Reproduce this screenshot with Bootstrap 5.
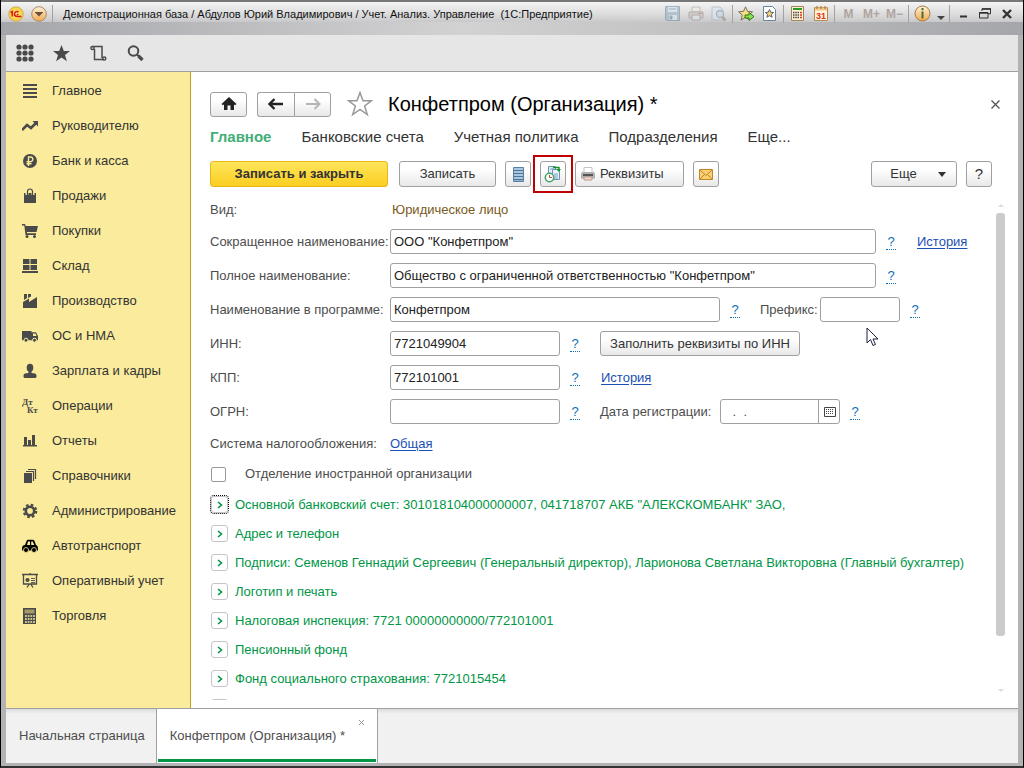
<!DOCTYPE html>
<html lang="ru">
<head>
<meta charset="utf-8">
<meta name="viewport" content="width=device-width, initial-scale=1">
<title>Конфетпром (Организация)</title>
<link href="https://cdn.jsdelivr.net/npm/bootstrap@5.3.0/dist/css/bootstrap.min.css" rel="stylesheet">
<style>
:root { --line: #a0a0a0; --ink: #333; --green: #009646; --blue: #0a6fb5; }
body { font-family: "Liberation Sans", Arial, sans-serif; font-size: 13px; line-height: 16px; color: var(--ink); background: #fff; }
svg { display: block; flex: none; }
.app-window { height: 100vh; border-left: 1px solid #000; border-right: 1px solid #000; border-bottom: 2px solid #333; background: #b3b3b5; padding: 0 5px 3px 5px; }
.title-bar { height: 35px; flex: none; margin: 0 -5px; padding: 0 5px 10px 3px; border-top: 2px solid #777; color: #111; font-size: 11px;
  background: linear-gradient(to bottom, #f4f4f4 0, #dcdcdd 12px, #c9c9cb 20px, transparent 20px), linear-gradient(to right, #a5a6aa, #d2d2d3 45%, #c4c4c5 65%, #a5a6aa); }
.title-bar button { width: 23px; height: 23px; border: 0; padding: 0; background: none; display: flex; align-items: center; justify-content: center; color: #b0a49e; font-size: 12px; font-weight: bold; }
.title-bar .win-btn { width: 22px; }
.title-bar .drop-btn { width: 13px; }
.bar-sep { width: 1px; height: 18px; margin: 0 2px; background: #a2a2a4; }
.tool-bar { height: 37px; flex: none; padding-left: 10px; background: #e6e6e6; border-bottom: 1px solid var(--line); }
.tool-bar button { width: 37px; height: 34px; padding: 0 10px 0 6px; border: 0; background: none; }
.middle { min-height: 0; overflow: hidden; }
.side-menu { width: 185px; background: #faeb9d; border-right: 1px solid #b9a21c; padding-top: 1px; }
.side-menu a { height: 35px; padding-left: 16px; gap: 14px; color: var(--ink); text-decoration: none; }
.work-area { padding: 19px 13px 8px 19px; background: #fff; min-width: 0; }
.page-title { font-size: 20px; line-height: 26px; color: #000; padding-left: 15px; }
.soft-btn { border: 1px solid #a0a0a0; border-radius: 3px; background: linear-gradient(#fff 30%, #e8e8e8); color: var(--ink); padding: 0; height: 26px; display: flex; align-items: center; justify-content: center; }
.soft-btn.low { height: 25px; }
.nav-btn { width: 37px; }
.nav-pair { margin: 0 16px 0 10px; }
.main-btn { width: 178px; border-color: #e7b71a; background: linear-gradient(#fee65c, #fbce21); font-weight: bold; }
.save-btn { width: 97px; margin-left: 2px; }
.print-btn { width: 109px; padding-left: 5px; gap: 5px; }
.more-btn { width: 86px; gap: 21px; padding-left: 8px; }
.help-btn { margin-right: 13px; font-size: 15px; }
.fill-btn { width: 200px; margin-left: 10px; }
.square-btn { width: 26px; }
.plain-x { border: 0; background: none; padding: 0; }
.sections { font-size: 15px; line-height: 18px; gap: 30px; padding-top: 11px; }
.sections a { color: var(--ink); text-decoration: none; }
.sections a.current { color: #43ae76; font-weight: bold; }
.commands { gap: 9px; padding-top: 15px; }
.red-frame { position: absolute; inset: -6px -7px; border: 2px solid #c00000; pointer-events: none; z-index: 2; }
.form-area { overflow: hidden; padding-top: 12px; color: #4d4d4d; }
.kind-row { height: 21px; margin-bottom: 9px; }
.kind-value { color: #79591a; padding-left: 2px; }
.field-row { height: 25px; margin-bottom: 9px; }
.field-name { width: 180px; flex: none; white-space: nowrap; }
.field-box { height: 25px; border: 1px solid #a0a0a0; border-radius: 3px; padding: 0 3px; color: #222; background: #fff; min-width: 0; }
.code-box { width: 170px; }
.prefix-name { width: 70px; padding-left: 10px; }
.prefix-box { width: 80px; }
.prefix-tail { width: 66px; flex: none; }
.date-name { width: 130px; padding-left: 10px; }
.help-slot { width: 30px; flex: none; text-align: center; }
.help-slot a { display: inline-block; padding: 0 1px; line-height: 15px; border-bottom: 1px dotted var(--blue); color: var(--blue); text-decoration: none; }
.ref { color: #1c4fb4; text-underline-offset: 2px; }
.tail { width: 90px; flex: none; padding-left: 11px; }
.date-box { width: 120px; height: 25px; border: 1px solid #a0a0a0; border-radius: 3px; }
.date-box input { width: 97px; border: 0; padding: 0 8px; background: none; color: #4d4d4d; white-space: pre; }
.date-box button { border: 0; border-left: 1px solid #a0a0a0; background: none; padding: 0 5px; }
.tax-row { height: 22px; }
.tick-row { height: 38px; }
.tick { width: 15px; height: 15px; border: 1px solid #999; border-radius: 2px; appearance: none; margin: 0 19px 0 1px; background: #fff; }
.group-list { margin-top: -3px; }
.group-row { height: 29px; flex: none; border: 0; padding: 0; background: none; color: var(--green); gap: 7px; white-space: nowrap; text-align: left; }
.chev { width: 17px; height: 17px; border: 1px solid #c5c5c5; border-radius: 3px; display: flex; align-items: center; justify-content: center; flex: none; margin-left: 1px; }
.focused .chev { outline: 1px dotted #000; outline-offset: 0; }
.scroll-rail { width: 9px; margin: 13px 0 8px; }
.scroll-thumb { background: #cbcbcb; border-radius: 3px; flex: 0 1 423px; margin-top: 6px; }
.window-tabs { height: 55px; flex: none; border-top: 1px solid var(--line); background: linear-gradient(#dcdcdc, #f1f1f1 5px); color: #4d4d4d; }
.window-tabs a { color: inherit; text-decoration: none; padding: 0 11px 0 13px; display: flex; align-items: center; }
.open-tab { width: 222px; position: relative; background: #fff; border: solid var(--line); border-width: 0 1px; }
.open-tab::after { content: ""; position: absolute; left: 1px; right: 1px; bottom: 1px; height: 3px; background: var(--green); }
.open-tab button { position: absolute; right: 12px; top: 10px; }
.pointer { position: absolute; left: 656px; top: 140px; pointer-events: none; }
</style>
</head>
<body>
<div class="app-window d-flex flex-column">
  <header class="title-bar d-flex align-items-center">
    <button type="button" aria-label="1С"><svg width="16" height="16" viewBox="0 0 16 16"><defs><radialGradient id="gy"><stop offset="0" stop-color="#fff6a0"/><stop offset="1" stop-color="#f7c52c"/></radialGradient><linearGradient id="go" x2="0" y2="1"><stop offset="0" stop-color="#fff2dc"/><stop offset="1" stop-color="#f3a94e"/></linearGradient></defs><circle cx="8" cy="8" r="7.3" fill="url(#gy)" stroke="#c9a46a" stroke-width=".8"/><path d="M2.500 6.500L4.300 5.500v5M10.500 6.300C9 4.800 6.500 5.500 6.500 8s1.500 2.500 3 2.500h4M10.500 8.500H8.700" fill="none" stroke="#d8200f" stroke-width="1.600"/></svg></button>
    <button type="button" aria-label="Меню"><svg width="16" height="16" viewBox="0 0 16 16"><circle cx="8" cy="8" r="7.300" fill="url(#go)" stroke="#a98a66"/><path d="M3.500 6h9L8 10.500z" fill="#6a5038"/></svg></button>
    <span class="bar-sep"></span>
    <span class="ps-2 text-nowrap">Демонстрационная база / Абдулов Юрий Владимирович / Учет. Анализ. Управление&nbsp; (1С:Предприятие)</span>
    <div class="d-flex align-items-center ms-auto">
      <button type="button" aria-label="Сохранить"><svg width="15" height="15" viewBox="0 0 15 15" opacity=".65"><path d="M.5.500h14v14h-13l-1-1z" fill="#9bb5c8" stroke="#7895aa"/><path d="M3 1h9v5H3zM4 9h8v5H4z" fill="#dbe3e9"/><path d="M4 3h7M5 10h2v3H5z" stroke="#7895aa" fill="#7895aa"/></svg></button>
      <button type="button" aria-label="Печать"><svg width="16" height="15" viewBox="0 0 16 15" opacity=".55"><path d="M4 1h8v5H4z" fill="#f5ebe3" stroke="#a59a94"/><path d="M1 6h14v6H1z" fill="#c9beb8" stroke="#928b88"/><path d="M4 9h8v5H4z" fill="#dfe9ef" stroke="#928b88"/><path d="M10 7.500h4" stroke="#c65"/></svg></button>
      <button type="button" aria-label="Просмотр"><svg width="16" height="16" viewBox="0 0 16 16" opacity=".6"><path d="M1 1h8l3 3v10H1z" fill="#dae4ec" stroke="#9badbb"/><circle cx="9" cy="8" r="3.500" fill="#c3d8e5" stroke="#7d99ad" stroke-width="1.300"/><path d="M11.500 11l3 3.500" stroke="#a87e68" stroke-width="2.500"/></svg></button>
      <span class="bar-sep"></span>
      <button type="button" aria-label="В избранное"><svg width="17" height="16" viewBox="0 0 17 16"><path d="M7.500.8l2 4.600 5 .4-3.800 3.300 1.200 4.900-4.400-2.600L3.100 14l1.200-4.900L.6 5.800l4.900-.4z" fill="#fbdc85" stroke="#777061"/><path d="M7 9h4V6.500l5 4-5 4V12H7z" fill="#8ee04e" stroke="#267b17"/></svg></button>
      <button type="button" aria-label="Избранное"><svg width="13" height="15" viewBox="0 0 13 15"><path d="M.5.500h9l3 3v11H.5z" fill="#fff" stroke="#69829a"/><path d="M6.500 3.500l1.200 2.700 2.900.3-2.200 1.900.7 2.900-2.600-1.600-2.600 1.600.7-2.900-2.200-1.900 2.900-.3z" fill="#fbd275" stroke="#555f70"/></svg></button>
      <span class="bar-sep"></span>
      <button type="button" aria-label="Калькулятор"><svg width="13" height="15" viewBox="0 0 13 15"><path d="M.5.500h12v14H.5z" fill="#fff1d5" stroke="#a48455"/><path d="M2 3h9" stroke="#289d25" stroke-width="2"/><path d="M2 6.500h6M2 9h6M2 11.500h6" stroke="#444" stroke-width="1.400" stroke-dasharray="1.500 .8"/><path d="M9 6.500h2M9 9h2M9 11.500h2" stroke="#d43b21" stroke-width="1.400"/></svg></button>
      <button type="button" aria-label="Календарь"><svg width="14" height="15" viewBox="0 0 14 15"><path d="M.5 1.500h13v13H.5z" fill="#fff4db" stroke="#b48a51"/><path d="M1 3h12" stroke="#f2c784" stroke-width="3"/><path d="M3 0v3M7 0v3M11 0v3" stroke="#996f3c"/><text x="7" y="13" text-anchor="middle" font-size="9" fill="#de3219">31</text></svg></button>
      <span class="bar-sep"></span>
      <button type="button">M</button><button type="button">M+</button><button type="button">M−</button>
      <span class="bar-sep"></span>
      <button type="button" aria-label="Сведения"><svg width="17" height="17" viewBox="0 0 17 17"><circle cx="8.500" cy="8.500" r="7.500" fill="url(#go)" stroke="#9d7a44"/><path d="M8.500 3v2.300M8.500 6.500v7" stroke="#4c6e28" stroke-width="2"/></svg></button>
      <button type="button" class="drop-btn" aria-label="Ещё"><svg class="mt-2" width="8" height="4"><path d="M0 0h8L4 4z" fill="#444"/></svg></button>
      <span class="bar-sep"></span>
      <button type="button" class="win-btn" aria-label="Свернуть"><svg width="9" height="9"><path d="M1 7.500h7" stroke="#333" stroke-width="2"/></svg></button>
      <button type="button" class="win-btn" aria-label="Восстановить"><svg width="12" height="11" viewBox="0 0 12 11" fill="none" stroke="#333"><path d="M3 3V.8h8.500v5H9M.5 4.500H9v5.500H.5z"/><path d="M3 1h9M0 5h9" stroke-width="1.500"/></svg></button>
      <button type="button" class="win-btn" aria-label="Закрыть"><svg width="10" height="10"><path d="M1 1l8 8M9 1L1 9" stroke="#333" stroke-width="2.400"/></svg></button>
    </div>
  </header>

  <div class="tool-bar d-flex align-items-center">
    <button type="button" class="ps-0 pe-3" aria-label="Разделы"><svg width="18" height="18" fill="#4a4a4a"><g id="dots"><circle cx="3" cy="3" r="2.600"/><circle cx="9" cy="3" r="2.600"/><circle cx="15" cy="3" r="2.600"/></g><use href="#dots" y="6"/><use href="#dots" y="12"/></svg></button>
    <button type="button" class="ps-0" aria-label="Избранное"><svg width="17" height="17" viewBox="0 0 17 17"><path d="M8.500 0l2.300 6H17l-5 3.900 1.900 6.400-5.400-3.900-5.400 3.900L5 9.900 0 6h6.200z" fill="#4a4a4a"/></svg></button>
    <button type="button" class="ps-0" aria-label="История"><svg width="17" height="17" viewBox="0 0 17 17" fill="none" stroke="#4a4a4a" stroke-width="1.500"><path d="M2.500 1.500h9.500v11.500M4.500 4v10.500h9.500"/><circle cx="2.500" cy="3" r="1.600"/><circle cx="14.200" cy="13.500" r="1.600"/></svg></button>
    <button type="button" class="ps-0" aria-label="Поиск"><svg width="17" height="17" viewBox="0 0 17 17" fill="none" stroke="#4a4a4a"><circle cx="6.500" cy="6" r="4.800" stroke-width="2"/><path d="M10 9.500l2 2" stroke-width="2"/><path d="M11.500 11l4 4" stroke-width="3.200"/></svg></button>
  </div>

  <div class="middle d-flex flex-fill">
    <nav class="side-menu flex-shrink-0">
      <a href="#" class="d-flex align-items-center"><svg width="16" height="16"><path d="M1 2h14M1 6h14M1 10h14M1 14h14" stroke="#4a4a4a" stroke-width="2"/></svg>Главное</a>
      <a href="#" class="d-flex align-items-center"><svg width="16" height="16"><path d="M0 12l5-5 4 3 5-5" fill="none" stroke="#4a4a4a" stroke-width="2.500"/><path d="M10.500 3H16v5.500z" fill="#4a4a4a"/></svg>Руководителю</a>
      <a href="#" class="d-flex align-items-center"><svg width="16" height="16"><circle cx="8" cy="8" r="7" fill="#4a4a4a"/><path d="M6.500 13V4h2.500a2.400 2.400 0 010 4.700H4.500M4.500 10.700h5" fill="none" stroke="#faeb9d" stroke-width="1.400"/></svg>Банк и касса</a>
      <a href="#" class="d-flex align-items-center"><svg width="16" height="16"><path d="M2 5h12v10H2z" fill="#4a4a4a"/><path d="M5 7V4a3 3 0 016 0v3" fill="none" stroke="#faeb9d" stroke-width="3"/><path d="M5.500 7V3.500a2.500 2.500 0 015 0V7" fill="none" stroke="#4a4a4a" stroke-width="1.200"/></svg>Продажи</a>
      <a href="#" class="d-flex align-items-center"><svg width="16" height="16" fill="#4a4a4a"><path d="M0 1h3l.7 2H16l-1.500 6H5v1.200h9V12H3.500L2.300 2.600H0z"/><circle cx="5" cy="13.500" r="1.500"/><circle cx="12.500" cy="13.500" r="1.500"/></svg>Покупки</a>
      <a href="#" class="d-flex align-items-center"><svg width="16" height="16" fill="#4a4a4a"><path d="M1 1h6.500v5H1zM8.500 1H15v5H8.500zM1 7h6.500v5H1zM8.500 7H15v5H8.500zM0 13h16v2H0z"/></svg>Склад</a>
      <a href="#" class="d-flex align-items-center"><svg width="16" height="16" fill="#4a4a4a"><path d="M1 15V9l6-3.500V9l8-5v11zM2 1h3v4L2 7zM6 1h3v2.500L6 5z"/></svg>Производство</a>
      <a href="#" class="d-flex align-items-center"><svg width="16" height="16"><path d="M0 3h9.500v1.200H14l2 4v4H0z" fill="#4a4a4a"/><path d="M11 5.500h2.500L14.500 8H11z" fill="#faeb9d"/><g fill="#4a4a4a" stroke="#faeb9d"><circle cx="4" cy="12.200" r="2"/><circle cx="12.500" cy="12.200" r="2"/></g></svg>ОС и НМА</a>
      <a href="#" class="d-flex align-items-center"><svg width="16" height="16" fill="#4a4a4a"><ellipse cx="8" cy="4.700" rx="3.300" ry="4"/><path d="M6.500 7h3v3l3.500.5c1.500.5 1.500 1.500 1.500 3.500-.5 1-1.500 1-2 1h-9c-.5 0-1.500 0-2-1 0-2 0-3 1.500-3.500l3.500-.5z"/></svg>Зарплата и кадры</a>
      <a href="#" class="d-flex align-items-center"><svg width="16" height="16" font-family="Liberation Serif, serif" font-weight="bold" fill="#4a4a4a"><text x="0" y="7" font-size="9">Дт</text><text x="5" y="15" font-size="9">Кт</text></svg>Операции</a>
      <a href="#" class="d-flex align-items-center"><svg width="16" height="16" fill="#4a4a4a"><path d="M2 4h3v8H2zM6 7h3v5H6zM10 2h3v10h-3zM1 12h14v1.500H1z"/></svg>Отчеты</a>
      <a href="#" class="d-flex align-items-center"><svg width="16" height="16"><path d="M2 5h8v10H2z" fill="#4a4a4a"/><path d="M4 3.500h7.500V13M6 1.500h7.500V11" fill="none" stroke="#4a4a4a" stroke-width="1.200"/></svg>Справочники</a>
      <a href="#" class="d-flex align-items-center"><svg width="16" height="16" fill="none" stroke="#4a4a4a"><circle cx="8" cy="8" r="4.200" stroke-width="2.600"/><circle cx="8" cy="8" r="6.200" stroke-width="2.200" stroke-dasharray="2.600 2.270"/></svg>Администрирование</a>
      <a href="#" class="d-flex align-items-center"><svg width="16" height="16"><path d="M0 11c0-3 1-4 3-4l1.500-4c.3-.8 1-1.200 2-1.200h4c1 0 1.500.4 2 1.200L14 7c1.500.5 2 2 2 4v1.500H0z"/><path d="M5 7l1-3.500h2V7zM9.200 7V3.500h1.500L12.300 7z" fill="#faeb9d"/><g stroke="#faeb9d" stroke-width=".8"><circle cx="4" cy="12" r="2.500"/><circle cx="12" cy="12" r="2.500"/></g></svg>Автотранспорт</a>
      <a href="#" class="d-flex align-items-center"><svg width="16" height="16" fill="none" stroke="#4a4a4a"><path d="M0 1.500h16M1.500 2v9h13V2M8 0v2M7 11.500l-2 3M9 11.500l2 3" stroke-width="1.300"/><path d="M9 5.500h4M9 7.500h4M9 9.500h4" stroke-width=".9"/><circle cx="5.500" cy="7" r="1.200" stroke-width="1.800"/></svg>Оперативный учет</a>
      <a href="#" class="d-flex align-items-center"><svg width="16" height="16"><path d="M1 0h13v16H1z" fill="#4a4a4a"/><path d="M2.500 1.500h10v4h-10z" fill="#a39a68"/><path d="M3 8h10M3 11h10M3 14h10" stroke="#faeb9d" stroke-width="1.700" stroke-dasharray="1.800 .9"/></svg>Торговля</a>
    </nav>

    <main class="work-area flex-fill d-flex flex-column">
      <div class="d-flex align-items-center">
        <button type="button" class="soft-btn low nav-btn" aria-label="Домой"><svg width="16" height="14"><path d="M8 0l7.500 7-1.300 1.300L13 7.500V13H9.500V8.500h-3V13H3V7.500l-1.200.8L.5 7z" fill="#222"/></svg></button>
        <div class="nav-pair d-flex">
          <button type="button" class="soft-btn low nav-btn rounded-end-0 border-end-0" aria-label="Назад"><svg width="16" height="12"><path d="M1 6h14M6.500 1L1.500 6l5 5" fill="none" stroke="#222" stroke-width="2.400"/></svg></button>
          <button type="button" class="soft-btn low nav-btn rounded-start-0" aria-label="Вперед"><svg width="16" height="12"><path d="M1 6h14M9.500 1l5 5-5 5" fill="none" stroke="#b5b5b5" stroke-width="2"/></svg></button>
        </div>
        <svg width="26" height="26" viewBox="0 0 26 26"><path d="M13 1.500l3 8.200h8.500l-6.900 5.300 2.700 8.500-7.300-5.100-7.300 5.100L8.400 15 1.500 9.700H10z" fill="#fff" stroke="#999" stroke-width="1.500"/></svg>
        <h1 class="page-title mb-0 fw-normal">Конфетпром (Организация) *</h1>
        <button type="button" class="plain-x ms-auto me-1" aria-label="Закрыть"><svg width="11" height="9"><path d="M1.500.500l8 8M9.500.500l-8 8" stroke="#555" stroke-width="1.300"/></svg></button>
      </div>
      <nav class="sections d-flex text-nowrap"><a href="#" class="current">Главное</a><a href="#">Банковские счета</a><a href="#">Учетная политика</a><a href="#">Подразделения</a><a href="#">Еще...</a></nav>
      <div class="commands d-flex">
        <button type="button" class="soft-btn main-btn">Записать и закрыть</button>
        <button type="button" class="soft-btn save-btn">Записать</button>
        <button type="button" class="soft-btn square-btn" aria-label="Список"><svg width="11" height="15"><path d="M.5.500h10v14H.5z" fill="#8db2d2" stroke="#59809f"/><path d="M1 3.500h9M1 6.500h9M1 9.500h9M1 12.500h9" stroke="#4f7596"/><path d="M1 2h9M1 5h9M1 8h9M1 11h9" stroke="#c8dcec"/></svg></button>
        <div class="position-relative">
          <button type="button" class="soft-btn square-btn" aria-label="История изменений"><svg width="18" height="18"><path d="M4.500 1.500h7v10h-7z" fill="#e3eefa" stroke="#6d90b5"/><path d="M8.500 4.500h7v10h-7z" fill="#eaf3fc" stroke="#6d90b5"/><path d="M6 4h4M10 9h4M10 11h4M10 13h4" stroke="#7a9fc5"/><path d="M9 2.500h6v2" fill="none" stroke="#159328" stroke-width="1.500"/><path d="M12.500 4h4.500l-2.200 3z" fill="#159328"/><circle cx="5.500" cy="12.500" r="4.200" fill="#fff" stroke="#43a370" stroke-width="1.500"/><path d="M5.500 10v2.500H8" fill="none" stroke="#c04d2b"/></svg></button>
          <span class="red-frame"></span>
        </div>
        <button type="button" class="soft-btn print-btn justify-content-start"><svg width="14" height="14"><path d="M3 .5h8v6H3z" fill="#fff" stroke="#c5c5c5"/><path d="M1 5h12l1 2v4.500H0V7z" fill="#b0b0b4"/><path d="M2 8h10" stroke="#555" stroke-width="2"/><path d="M3 10h8v3H3z" fill="#f8d7c8" stroke="#b59c92"/></svg>Реквизиты</button>
        <button type="button" class="soft-btn square-btn" aria-label="Почта"><svg width="14" height="11"><path d="M.5.500h13v10H.5z" fill="#f8cf73" stroke="#c38525"/><path d="M1 1l6 5.500L13 1M1 10l4.500-4.500M13 10L8.500 5.500" fill="none" stroke="#c38525"/></svg></button>
        <button type="button" class="soft-btn more-btn ms-auto">Еще<svg width="8" height="5"><path d="M0 0h8L4 5z" fill="#333"/></svg></button>
        <button type="button" class="soft-btn square-btn help-btn">?</button>
      </div>

      <div class="middle d-flex flex-fill">
        <form class="form-area flex-fill position-relative">
          <div class="d-flex align-items-center kind-row"><span class="field-name">Вид:</span><span class="kind-value">Юридическое лицо</span></div>
          <div class="d-flex align-items-center field-row"><label class="field-name" for="f1">Сокращенное наименование:</label><input id="f1" class="field-box flex-fill" value='ООО "Конфетпром"'><span class="help-slot"><a href="#">?</a></span><span class="tail"><a class="ref" href="#">История</a></span></div>
          <div class="d-flex align-items-center field-row"><label class="field-name" for="f2">Полное наименование:</label><input id="f2" class="field-box flex-fill" value='Общество с ограниченной ответственностью "Конфетпром"'><span class="help-slot"><a href="#">?</a></span><span class="tail"></span></div>
          <div class="d-flex align-items-center field-row"><label class="field-name" for="f3">Наименование в программе:</label><input id="f3" class="field-box flex-fill" value="Конфетпром"><span class="help-slot"><a href="#">?</a></span><label class="prefix-name" for="f4">Префикс:</label><input id="f4" class="field-box prefix-box"><span class="help-slot"><a href="#">?</a></span><span class="prefix-tail"></span></div>
          <div class="d-flex align-items-center field-row"><label class="field-name" for="f5">ИНН:</label><input id="f5" class="field-box code-box" value="7721049904"><span class="help-slot"><a href="#">?</a></span><button type="button" class="soft-btn low fill-btn">Заполнить реквизиты по ИНН</button></div>
          <div class="d-flex align-items-center field-row"><label class="field-name" for="f6">КПП:</label><input id="f6" class="field-box code-box" value="772101001"><span class="help-slot"><a href="#">?</a></span><span class="tail"><a class="ref" href="#">История</a></span></div>
          <div class="d-flex align-items-center field-row"><label class="field-name" for="f7">ОГРН:</label><input id="f7" class="field-box code-box"><span class="help-slot"><a href="#">?</a></span><label class="date-name" for="f8">Дата регистрации:</label><span class="date-box d-flex"><input id="f8" value=" .  ."><button type="button" aria-label="Выбрать дату"><svg width="12" height="10"><path d="M.5.500h11v9H.5z" fill="#fff" stroke="#444"/><path d="M2 2.500h8M2 4.500h8M2 6.500h8" stroke="#444" stroke-dasharray="1 1"/></svg></button></span><span class="help-slot"><a href="#">?</a></span></div>
          <div class="d-flex align-items-center tax-row"><span class="field-name">Система налогообложения:</span><a class="ref" href="#">Общая</a></div>
          <div class="d-flex align-items-center tick-row"><input id="f9" type="checkbox" class="tick"><label for="f9">Отделение иностранной организации</label></div>
          <div class="d-flex flex-column group-list">
            <button type="button" class="group-row focused d-flex align-items-center"><span class="chev"><svg width="6" height="8"><path d="M1 1l3.500 3L1 7" fill="none" stroke="#009646" stroke-width="1.600"/></svg></span>Основной банковский счет: 301018104000000007, 041718707 АКБ "АЛЕКСКОМБАНК" ЗАО,</button>
            <button type="button" class="group-row d-flex align-items-center"><span class="chev"><svg width="6" height="8"><path d="M1 1l3.500 3L1 7" fill="none" stroke="#009646" stroke-width="1.600"/></svg></span>Адрес и телефон</button>
            <button type="button" class="group-row d-flex align-items-center"><span class="chev"><svg width="6" height="8"><path d="M1 1l3.500 3L1 7" fill="none" stroke="#009646" stroke-width="1.600"/></svg></span>Подписи: Семенов Геннадий Сергеевич (Генеральный директор), Ларионова Светлана Викторовна (Главный бухгалтер)</button>
            <button type="button" class="group-row d-flex align-items-center"><span class="chev"><svg width="6" height="8"><path d="M1 1l3.500 3L1 7" fill="none" stroke="#009646" stroke-width="1.600"/></svg></span>Логотип и печать</button>
            <button type="button" class="group-row d-flex align-items-center"><span class="chev"><svg width="6" height="8"><path d="M1 1l3.500 3L1 7" fill="none" stroke="#009646" stroke-width="1.600"/></svg></span>Налоговая инспекция: 7721 00000000000/772101001</button>
            <button type="button" class="group-row d-flex align-items-center"><span class="chev"><svg width="6" height="8"><path d="M1 1l3.500 3L1 7" fill="none" stroke="#009646" stroke-width="1.600"/></svg></span>Пенсионный фонд</button>
            <button type="button" class="group-row d-flex align-items-center"><span class="chev"><svg width="6" height="8"><path d="M1 1l3.500 3L1 7" fill="none" stroke="#009646" stroke-width="1.600"/></svg></span>Фонд социального страхования: 7721015454</button>
            <button type="button" class="group-row d-flex align-items-center" aria-label="Ещё группа"><span class="chev"></span></button>
          </div>
          <svg class="pointer" width="13" height="20"><path d="M1 1v15l3.500-3.500 2.500 6 2.500-1-2.500-5.500h5z" fill="#fff" stroke="#1b1f3a"/></svg>
        </form>
        <div class="scroll-rail d-flex flex-column align-items-center">
          <svg width="6" height="3" class="mt-1"><path d="M3 0l3 3H0z" fill="#ddd"/></svg>
          <span class="scroll-thumb w-100"></span>
          <svg width="6" height="3" class="mt-auto"><path d="M0 0h6L3 3z" fill="#ddd"/></svg>
        </div>
      </div>
    </main>
  </div>

  <footer class="window-tabs d-flex">
    <a href="#">Начальная страница</a>
    <div class="open-tab d-flex"><a href="#">Конфетпром (Организация) *</a><button type="button" class="plain-x" aria-label="Закрыть вкладку"><svg width="7" height="7"><path d="M1 1l5 5M6 1L1 6" stroke="#999"/></svg></button></div>
  </footer>
</div>
<script src="https://cdn.jsdelivr.net/npm/bootstrap@5.3.0/dist/js/bootstrap.bundle.min.js"></script>
</body>
</html>
